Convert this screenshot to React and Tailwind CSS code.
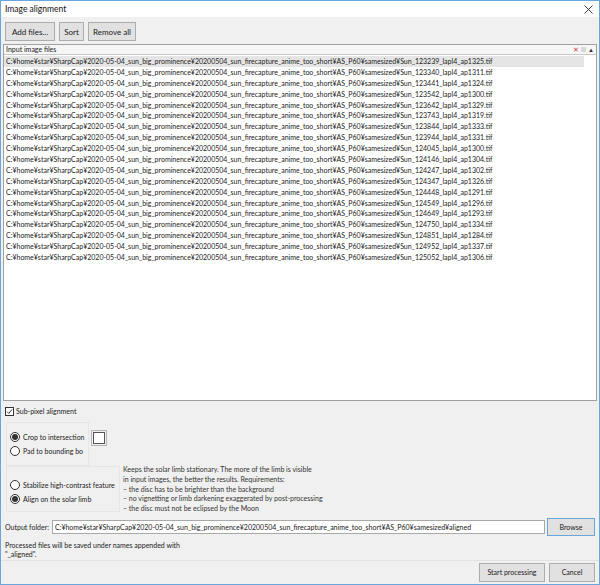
const base = "C:¥home¥star¥SharpCap¥2020-05-04_sun_big_prominence¥20200504_sun_firecapture_anime_too_short¥AS_P60¥samesized¥Sun_";

const files = [
  "123239_lapl4_ap1325", "123340_lapl4_ap1311", "123441_lapl4_ap1324", "123542_lapl4_ap1300",
  "123642_lapl4_ap1329", "123743_lapl4_ap1319", "123844_lapl4_ap1333", "123944_lapl4_ap1331",
  "124045_lapl4_ap1300", "124146_lapl4_ap1304", "124247_lapl4_ap1302", "124347_lapl4_ap1326",
  "124448_lapl4_ap1291", "124549_lapl4_ap1296", "124649_lapl4_ap1293", "124750_lapl4_ap1334",
  "124851_lapl4_ap1284", "124952_lapl4_ap1337", "125052_lapl4_ap1306",
];

function Button({ children, className = "" }) {
  return (
    <div className={"flex items-center justify-center bg-[#e1e1e1] border border-[#adadad] text-[#1a1a1a] whitespace-nowrap " + className}>
      {children}
    </div>
  );
}

function Radio({ checked, label }) {
  return (
    <div className="flex items-center gap-[3px] h-[14px] whitespace-nowrap">
      <div className="w-[10px] h-[10px] shrink-0 rounded-full border border-[#333] bg-white flex items-center justify-center">
        {checked && <div className="w-[6px] h-[6px] rounded-full bg-[#333]" />}
      </div>
      <span>{label}</span>
    </div>
  );
}

export default function App() {
  return (
    <div
      className="w-[600px] h-[585px] border border-[#6aa6dc] bg-[#f0f0f0] flex flex-col text-[7px] text-[#222] overflow-hidden"
      style={{ fontFamily: 'Lato, "Noto Sans", sans-serif' }}
    >
      {/* title bar */}
      <div className="h-[16px] bg-white flex items-center justify-between pl-[4px] pr-[6px] shrink-0">
        <span className="text-[8.5px] text-[#111]">Image alignment</span>
        <svg width="9" height="9" viewBox="0 0 9 9" className="mt-[1px]">
          <path d="M0.5 0.5 L8.5 8.5 M8.5 0.5 L0.5 8.5" stroke="#222" strokeWidth="0.9" />
        </svg>
      </div>

      {/* toolbar */}
      <div className="flex gap-[4px] pl-[4px] pt-[5px] pb-[3px] shrink-0 text-[8px]">
        <Button className="w-[50px] h-[19px]">Add files...</Button>
        <Button className="w-[25px] h-[19px]">Sort</Button>
        <Button className="w-[48px] h-[19px]">Remove all</Button>
      </div>

      {/* list */}
      <div className="mx-[2px] h-[357px] border border-[#a0a0a0] bg-white flex flex-col shrink-0">
        <div className="h-[10px] border-b border-[#c8c8c8] bg-[#f6f6f6] flex items-center justify-between pl-[2px] pr-[2px]">
          <span className="leading-none">Input image files</span>
          <div className="flex items-center gap-[2px]">
            <span className="text-[7px] leading-none text-[#d23a3a]">✕</span>
            <span className="w-[5px] h-[5px] bg-[#d8d8d8]" />
            <span className="text-[6px] leading-none text-[#333]">▲</span>
          </div>
        </div>
        <div className="flex flex-col pt-[1px]">
          {files.map((f, i) => (
            <div
              key={f}
              className={"h-[10.9px] leading-[10.9px] pl-[2px] whitespace-nowrap mr-[12px] " + (i === 0 ? "bg-[#e5e5e5]" : "")}
            >
              {base + f + ".tif"}
            </div>
          ))}
        </div>
      </div>

      {/* options */}
      <div className="flex items-center gap-[2px] pl-[4px] mt-[4px] h-[12px]">
        <div className="w-[9px] h-[9px] border border-[#333] bg-white flex items-center justify-center">
          <svg width="7" height="7" viewBox="0 0 7 7">
            <path d="M1 3.6 L2.8 5.4 L6 1.4" stroke="#222" strokeWidth="0.9" fill="none" />
          </svg>
        </div>
        <span>Sub-pixel alignment</span>
      </div>

      <div className="flex pl-[5px] mt-[5px]">
        <div className="w-[83px] h-[44px] border border-[#e6e6e6] flex flex-col justify-center pl-[3px] overflow-hidden">
          <Radio checked label="Crop to intersection" />
          <Radio label="Pad to bounding bo" />
        </div>
        <div className="ml-[2px] mt-[8px] w-[16px] h-[16px] border border-[#b5b5b5] flex items-center justify-center">
          <div className="w-[12px] h-[12px] border border-[#555] bg-white" />
        </div>
      </div>

      <div className="flex pl-[5px]">
        <div className="w-[114px] h-[46px] border border-[#e6e6e6] flex flex-col justify-end pb-[5px] pl-[3px] overflow-hidden">
          <Radio label="Stabilize high-contrast feature" />
          <Radio checked label="Align on the solar limb" />
        </div>
        <div className="ml-[3px] -mt-[1px] leading-[9.75px] text-[#333] whitespace-nowrap">
          <div>Keeps the solar limb stationary. The more of the limb is visible</div>
          <div>in input images, the better the results. Requirements:</div>
          <div>– the disc has to be brighter than the background</div>
          <div>– no vignetting or limb darkening exaggerated by post-processing</div>
          <div>– the disc must not be eclipsed by the Moon</div>
        </div>
      </div>

      {/* output folder */}
      <div className="flex items-center pl-[4px] pr-[4px] mt-[4px] h-[18px]">
        <span className="mr-[3px] whitespace-nowrap">Output folder:</span>
        <div className="flex-1 h-[14px] border border-[#a9a9a9] bg-white pl-[2px] flex items-center whitespace-nowrap overflow-hidden">
          C:¥home¥star¥SharpCap¥2020-05-04_sun_big_prominence¥20200504_sun_firecapture_anime_too_short¥AS_P60¥samesized¥aligned
        </div>
        <Button className="ml-[2px] w-[48px] h-[18px] !border-[#6aa6dc]">Browse</Button>
      </div>

      <div className="pl-[4px] mt-[5px] leading-[9.5px]">
        <div>Processed files will be saved under names appended with</div>
        <div>"_aligned".</div>
      </div>

      {/* footer */}
      <div className="mt-auto h-[24px] border-t border-[#e2e2e2] flex justify-end items-center gap-[4px] pr-[4px] pb-[1px]">
        <Button className="w-[66px] h-[19px]">Start processing</Button>
        <Button className="w-[46px] h-[19px]">Cancel</Button>
      </div>
    </div>
  );
}
